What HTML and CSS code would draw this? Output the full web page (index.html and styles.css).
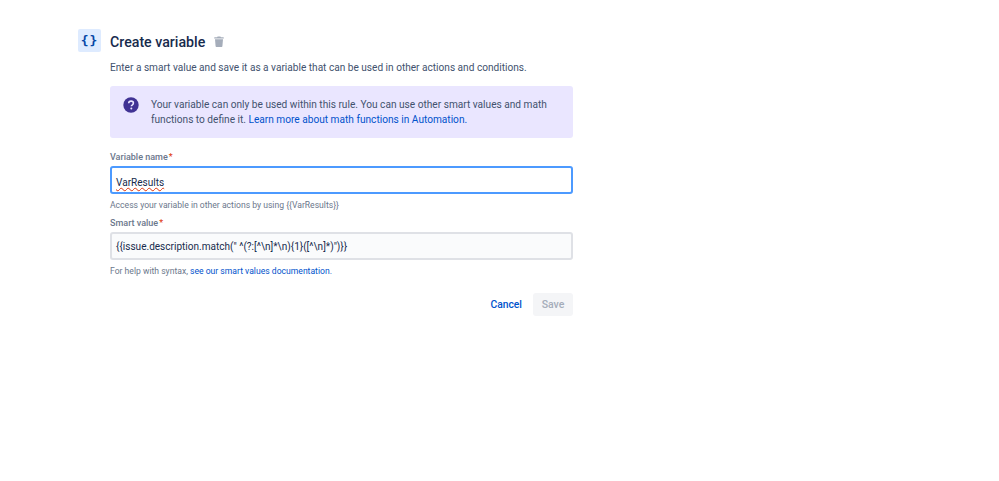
FILE: index.html
```html
<!DOCTYPE html>
<html lang="en">
<head>
<meta charset="utf-8">
<title>Create variable</title>
<link rel="stylesheet" href="styles.css">
</head>
<body>
<main class="page">
  <div class="icon-tile">
    <span class="braces">{}</span>
  </div>
  <div class="content">
    <header class="title-row">
      <h1 class="title">Create variable</h1>
      <svg class="trash" width="10" height="11" viewBox="0 0 10 11" aria-hidden="true">
        <path d="M3.6 0.4h2.8l.5.9H9.300a.5.5 0 0 1 .5.5v.7H.2v-.7a.5.5 0 0 1 .5-.5h2.400z"/>
        <path d="M1 3.200h8l-.6 7a.8.8 0 0 1-.8.7H2.400a.8.8 0 0 1-.8-.7z"/>
      </svg>
    </header>
    <p class="intro">Enter a smart value and save it as a variable that can be used in other actions and conditions.</p>
    <section class="notice">
      <svg class="notice-icon" width="16" height="16" viewBox="0 0 16 16" aria-hidden="true">
        <circle cx="8" cy="8" r="7.700" fill="#403294"/>
        <path d="M5.700 6.300c0-1.300 1-2.200 2.400-2.200s2.300.8 2.300 2c0 1-.6 1.500-1.300 2-.5.300-.7.600-.7 1.100" fill="none" stroke="#eae6ff" stroke-width="1.600"/>
        <circle cx="8.300" cy="11.500" r="1" fill="#eae6ff"/>
      </svg>
      <p class="notice-text">Your variable can only be used within this rule. You can use other smart values and math functions to define it. <a class="link" href="#">Learn more about math functions in Automation.</a></p>
    </section>
    <form class="form">
      <div class="label">Variable name<span class="req">*</span></div>
      <div class="field field-focus"><span class="misspelled">VarResults</span></div>
      <div class="hint">Access your variable in other actions by using {{VarResults}}</div>
      <div class="label label-second">Smart value<span class="req">*</span></div>
      <div class="field field-idle">{{issue.description.match(" ^(?:[^\n]*\n){1}([^\n]*)")}}</div>
      <div class="hint">For help with syntax, <a class="link" href="#">see our smart values documentation.</a></div>
      <div class="actions">
        <a class="cancel" href="#">Cancel</a>
        <span class="save">Save</span>
      </div>
    </form>
  </div>
</main>
</body>
</html>
```
FILE: styles.css
```css
* { box-sizing: border-box; }
html, body { margin: 0; padding: 0; background: #fff; }
body {
  font-family: Roboto, "Noto Sans", sans-serif;
  color: #172b4d;
  width: 999px;
  height: 481px;
  overflow: hidden;
}
.page {
  display: flex;
  padding: 29px 0 0 78px;
  gap: 9px;
}
.icon-tile {
  width: 23px;
  height: 23px;
  background: #deebff;
  border-radius: 2px;
  display: flex;
  align-items: center;
  justify-content: center;
}
.braces {
  font-family: "DejaVu Sans Mono", monospace;
  font-weight: 700;
  font-size: 13px;
  letter-spacing: 1px;
  color: #0747a6;
  line-height: 23px;
}
.content { width: 463px; }
.title-row {
  display: flex;
  align-items: center;
  gap: 9px;
  height: 27px;
}
.title {
  margin: 0;
  font-size: 14.200px;
  font-weight: 500;
  line-height: 27px;
  color: #172b4d;
}
.trash { fill: #a5adba; margin-bottom: 3px; }
.intro {
  margin: 2px 0 0;
  font-size: 10.100px;
  line-height: 20px;
  color: #42526e;
  white-space: nowrap;
}
.notice {
  margin-top: 8px;
  height: 52px;
  background: #eae6ff;
  border-radius: 3px;
  display: flex;
  padding: 11px 0 0 13px;
  gap: 12px;
}
.notice-icon { flex: none; }
.notice-text {
  margin: 0;
  font-size: 10.150px;
  line-height: 15px;
  width: 410px;
  color: #42526e;
}
.link { color: #0052cc; text-decoration: none; }
.form { display: block; }
.label {
  margin-top: 13px;
  font-size: 9px;
  font-weight: 500;
  line-height: 13px;
  color: #6b778c;
}
.label-second { margin-top: 5px; }
.req { color: #de350b; margin-left: 1px; font-weight: 400; }
.field {
  margin-top: 2px;
  height: 28px;
  border-radius: 3px;
  padding: 0 4px;
  font-size: 10.050px;
  line-height: 26px;
  color: #172b4d;
}
.field-focus { background: #fff; border: 2px solid #4c9aff; line-height: 30px; }
.field-idle { background: #fafbfc; border: 2px solid #dfe1e6; }
.misspelled {
  text-decoration: underline wavy #de350b 1px;
  text-underline-offset: 1px;
}
.hint {
  margin-top: 5px;
  font-size: 8.600px;
  line-height: 13px;
  color: #6b778c;
}
.actions {
  margin-top: 15px;
  display: flex;
  justify-content: flex-end;
  align-items: center;
  gap: 11px;
}
.cancel {
  font-size: 10.300px;
  font-weight: 500;
  color: #0052cc;
  text-decoration: none;
}
.save {
  width: 40px;
  height: 23px;
  background: #f4f5f7;
  border-radius: 3px;
  font-size: 10.500px;
  font-weight: 500;
  color: #a5adba;
  display: flex;
  align-items: center;
  justify-content: center;
}
```
